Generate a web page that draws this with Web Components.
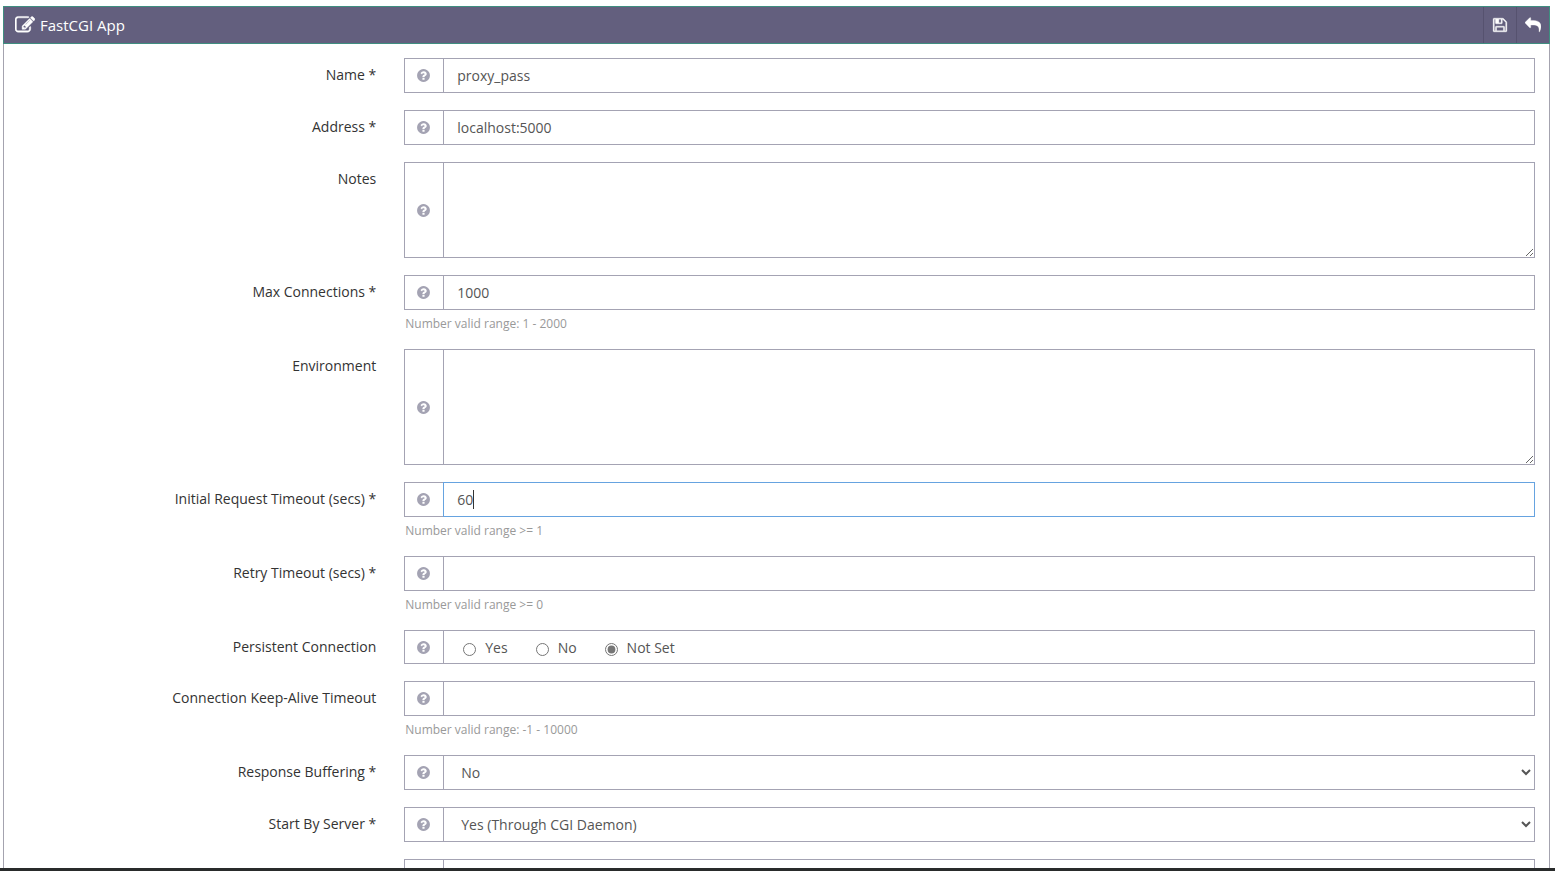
<!DOCTYPE html>
<html lang="en">
<head>
<meta charset="utf-8">
<title>FastCGI App</title>
<style>
  body { margin: 0; background: #fff; color: #333; font: 14px/20px "Open Sans", "Noto Sans", sans-serif; }
</style>
</head>
<body>
<app-frame>
  <edit-panel heading="FastCGI App">
    <form-row label="Name *" type="text" value="proxy_pass"></form-row>
    <form-row label="Address *" type="text" value="localhost:5000"></form-row>
    <form-row label="Notes" type="textarea" size="medium"></form-row>
    <form-row label="Max Connections *" type="text" value="1000" hint="Number valid range: 1 - 2000"></form-row>
    <form-row label="Environment" type="textarea" size="large"></form-row>
    <form-row label="Initial Request Timeout (secs) *" type="text" value="60" hint="Number valid range &gt;= 1" active></form-row>
    <form-row label="Retry Timeout (secs) *" type="text" hint="Number valid range &gt;= 0"></form-row>
    <form-row label="Persistent Connection" type="radio" options="Yes|No|Not Set" value="Not Set"></form-row>
    <form-row label="Connection Keep-Alive Timeout" type="text" hint="Number valid range: -1 - 10000"></form-row>
    <form-row label="Response Buffering *" type="select" options="No|Yes" value="No"></form-row>
    <form-row label="Start By Server *" type="select" options="Yes (Through CGI Daemon)|No" value="Yes (Through CGI Daemon)"></form-row>
    <form-row type="text"></form-row>
  </edit-panel>
</app-frame>

<script>
const ICONS = {
  help: '<path d="M1024 1376v-192q0-14-9-23t-23-9h-192q-14 0-23 9t-9 23v192q0 14 9 23t23 9h192q14 0 23-9t9-23zm256-672q0-88-55.5-163t-138.5-116-170-41q-243 0-371 213-15 24 8 42l132 100q7 6 19 6 16 0 25-12 53-68 86-92 34-24 86-24 48 0 85.5 26t37.5 59q0 38-20 61t-68 45q-63 28-115.5 86.5t-52.5 125.5v36q0 14 9 23t23 9h192q14 0 23-9t9-23q0-19 21.5-49.5t54.5-49.5q32-18 49-28.5t46-35 44.5-48 28-60.5 12.5-81zm384 192q0 209-103 385.5t-279.5 279.5-385.5 103-385.5-103-279.5-279.5-103-385.5 103-385.5 279.5-279.5 385.5-103 385.5 103 279.5 279.5 103 385.5z"/>',
  edit: '<path d="M888 1184l116-116-152-152-116 116v56h96v96h56zm440-720q-16-16-33 1l-350 350q-17 17-1 33t33-1l350-350q17-17 1-33zm80 594v190q0 119-84.5 203.5t-203.5 84.5h-832q-119 0-203.5-84.5t-84.5-203.5v-832q0-119 84.5-203.5t203.5-84.5h832q63 0 117 25 15 7 18 23 3 17-9 29l-49 49q-14 14-32 8-23-6-45-6h-832q-66 0-113 47t-47 113v832q0 66 47 113t113 47h832q66 0 113-47t47-113v-126q0-13 9-22l64-64q15-15 35-7t20 29zm-96-738l288 288-672 672h-288v-288zm444 132l-92 92-288-288 92-92q28-28 68-28t68 28l152 152q28 28 28 68t-28 68z"/>',
  save: '<path d="M512 1536h768v-384h-768v384zm896 0h128v-896q0-14-10-38.5t-20-34.5l-281-281q-10-10-34-20t-39-10v416q0 40-28 68t-68 28h-576q-40 0-68-28t-28-68v-416h-128v1280h128v-416q0-40 28-68t68-28h832q40 0 68 28t28 68v416zm-384-928v-320q0-13-9.5-22.5t-22.5-9.5h-192q-13 0-22.5 9.5t-9.5 22.5v320q0 13 9.5 22.5t22.5 9.5h192q13 0 22.5-9.5t9.5-22.5zm640 32v928q0 40-28 68t-68 28h-1344q-40 0-68-28t-28-68v-1344q0-40 28-68t68-28h928q40 0 88 20t76 48l280 280q28 28 48 76t20 88z"/>',
  back: '<g transform="translate(1792 0) scale(-1 1)"><path d="M1792 640q0 26-19 45l-512 512q-19 19-45 19t-45-19-19-45v-256h-224q-98 0-175.5 6t-154 21.5-133 42.5-105.5 69.5-80 101-48.5 138.5-17.5 181q0 55 5 123 0 6 2.5 23.5t2.5 26.5q0 15-8.5 25t-23.5 10q-16 0-28-17-7-9-13-22t-13.5-30-10.5-24q-127-285-127-451 0-199 53-333 162-403 875-403h224v-256q0-26 19-45t45-19 45 19l512 512q19 19 19 45z"/></g>'
};

customElements.define('fa-icon', class extends HTMLElement {
  connectedCallback() {
    if (this.shadowRoot) return;
    this.attachShadow({ mode: 'open' }).innerHTML = `
      <style>
        :host { display: block; width: var(--icon-size, 15px); height: var(--icon-size, 15px); }
        svg { display: block; width: 100%; height: 100%; fill: currentColor; stroke: currentColor; stroke-width: var(--icon-weight, 0); }
      </style>
      <svg viewBox="0 0 1792 1792" aria-hidden="true">${ICONS[this.getAttribute('name')]}</svg>`;
  }
});

customElements.define('app-frame', class extends HTMLElement {
  connectedCallback() {
    if (this.shadowRoot) return;
    this.attachShadow({ mode: 'open' }).innerHTML = `
      <style>
        :host { display: flex; flex-direction: column; height: 100vh; }
        main { flex: 1; min-height: 0; overflow: hidden; padding: 6px 5px 0 3px; }
        footer { flex: none; height: 3px; background: #292b2b; }
      </style>
      <main><slot></slot></main>
      <footer></footer>`;
  }
});

customElements.define('edit-panel', class extends HTMLElement {
  connectedCallback() {
    if (this.shadowRoot) return;
    this.attachShadow({ mode: 'open' }).innerHTML = `
      <style>
        :host { display: block; }
        header { display: flex; align-items: stretch; box-sizing: border-box; height: 38px;
          border: 1px solid #3f8e80; background: #635f7e; color: #fff; }
        h2 { flex: 1; display: flex; align-items: center; gap: 5px; margin: 0; padding-left: 11px;
          font-size: 15px; line-height: 20px; font-weight: 400; --icon-size: 20px; --icon-weight: 40; }
        button { display: flex; align-items: center; justify-content: center; width: 33px;
          padding: 0; border: 0; border-left: 1px solid #56526f; background: none; color: inherit; --icon-size: 16px; --icon-weight: 40; }
        form { border: 1px solid #a4a3af; border-top: 0; padding: 14px 0; }
      </style>
      <header>
        <h2><fa-icon name="edit"></fa-icon>${this.getAttribute('heading')}</h2>
        <button type="button" aria-label="Save"><fa-icon name="save"></fa-icon></button>
        <button type="button" aria-label="Go back"><fa-icon name="back"></fa-icon></button>
      </header>
      <form><slot></slot></form>`;
  }
});

customElements.define('form-row', class extends HTMLElement {
  connectedCallback() {
    if (this.shadowRoot) return;
    const get = name => this.getAttribute(name) || '';
    const label = get('label'), type = get('type'), value = get('value'), hint = get('hint');
    const options = get('options').split('|');
    const control = {
      text: () => `<input class="field" id="control" type="text" value="${value}" autocomplete="off">`,
      textarea: () => `<textarea class="field ${get('size')}" id="control"></textarea>`,
      select: () => `<select class="field" id="control">${options.map(o =>
        `<option${o === value ? ' selected' : ''}>${o}</option>`).join('')}</select>`,
      radio: () => `<div class="field choices" role="radiogroup" aria-labelledby="caption">${options.map(o =>
        `<label><input type="radio" name="choice"${o === value ? ' checked' : ''}>${o}</label>`).join('')}</div>`
    }[type]();
    const caption = type === 'radio'
      ? `<span class="caption" id="caption">${label}</span>`
      : `<label class="caption" for="control">${label}</label>`;
    this.attachShadow({ mode: 'open' }).innerHTML = `
      <style>
        :host { display: grid; grid-template-columns: 25% 1fr; margin-bottom: 17px; }
        .caption { padding: 7px 14px 0; text-align: right; }
        .body { padding: 0 14px; min-width: 0; }
        .group { display: flex; }
        .help { flex: none; display: flex; align-items: center; justify-content: center; width: 39px;
          padding: 0 2px 0 0; border: 1px solid #a4a3b3; border-right: 0; background: #fff; color: #a4a3b3; }
        .field { flex: 1; min-width: 0; box-sizing: border-box; height: 35px; margin: 0; padding: 0 13px;
          border: 1px solid #a4a3b3; border-radius: 0; background: #fff; color: #555; font: inherit; outline: 0; }
        .field:focus { border-color: #66a3e0; }
        /* steady, non-blinking caret at the end of the two-digit value */
        :host([active]) .field:focus { caret-color: transparent;
          background: linear-gradient(#333, #333) 29px center / 1px 19px no-repeat #fff; }
        textarea.field { display: block; padding: 6px 13px; resize: vertical; }
        textarea.medium { height: 96px; }
        textarea.large { height: 116px; }
        .choices { display: flex; align-items: center; gap: 28px; height: 34px; padding: 2px 0 0 19px; }
        .choices label { display: flex; align-items: center; gap: 9px; }
        .choices input { width: 13px; height: 13px; margin: 3px 0 0; accent-color: #767676; }
        p { margin: 6px 0 0; padding-left: 1px; font-size: 12px; line-height: 16px; color: #999; }
      </style>
      ${caption}
      <div class="body">
        <div class="group">
          <button class="help" type="button" aria-label="Help"><fa-icon name="help"></fa-icon></button>
          ${control}
        </div>
        ${hint ? `<p>${hint}</p>` : ''}
      </div>`;
    if (this.hasAttribute('active')) {
      const input = this.shadowRoot.getElementById('control');
      input.focus({ preventScroll: true });
      input.setSelectionRange(value.length, value.length);
    }
  }
});
</script>
</body>
</html>
